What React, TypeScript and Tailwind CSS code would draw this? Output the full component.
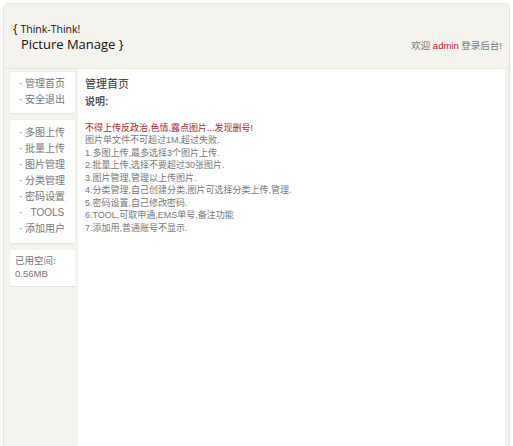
export default function App() {
  const menu1 = ['管理首页', '安全退出'];
  const menu2 = ['多图上传', '批量上传', '图片管理', '分类管理', '密码设置', 'TOOLS', '添加用户'];
  const lines = [
    '图片单文件不可超过1M,超过失败.',
    '1.多图上传,最多选择3个图片上传.',
    '2.批量上传,选择不要超过30张图片.',
    '3.图片管理,管理以上传图片.',
    '4.分类管理,自己创建分类,图片可选择分类上传,管理.',
    '5.密码设置,自己修改密码.',
    '6.TOOL,可取申通,EMS单号,备注功能',
    '7.添加用,普通账号不显示.',
  ];
  return (
    <div
      className="w-[513px] h-[446px] bg-white pt-[3px] px-[3px] overflow-hidden"
      style={{ fontFamily: '"Liberation Sans", "Noto Sans CJK SC", sans-serif' }}
    >
      <div className="h-[443px] flex flex-col rounded-t-[6px] border border-b-0 border-[#e4e3dc] bg-[#f4f3ee]">
        <header className="h-[65px] flex items-end justify-between pl-[9px] pr-[7px] pb-[14px] border-b border-[#e8e7e0]">
          <div className="text-[#111] mb-[2px]" style={{ fontFamily: '"Open Sans", sans-serif' }}>
            <div className="flex items-baseline gap-[3px] leading-[14px]">
              <span className="text-[12px]">{'{'}</span>
              <span className="text-[10.5px]">Think-Think!</span>
            </div>
            <div className="text-[13px] pl-[8px] leading-[16px]">Picture Manage {'}'}</div>
          </div>
          <div className="text-[9.5px] text-[#777] pb-[1px]">
            欢迎 <span className="text-[#c0203a]">admin</span> 登录后台!
          </div>
        </header>
        <div className="flex flex-1 pl-[6px] pr-[4px]">
          <aside className="w-[68px] flex flex-col gap-[6px] pt-[3px] pr-[3px] text-[10px] text-[#777]">
            <div className="bg-white border-b border-[#e6e5df] rounded-[2px] pt-[4px] pb-[5px] pl-[9px] flex flex-col leading-[16px] shadow-[0_0_2px_rgba(0,0,0,0.06)]">
              {menu1.map((m) => (
                <div key={m}>· {m}</div>
              ))}
            </div>
            <div className="bg-white border-b border-[#e6e5df] rounded-[2px] pt-[5px] pb-[6px] pl-[9px] flex flex-col leading-[16px] shadow-[0_0_2px_rgba(0,0,0,0.06)]">
              {menu2.map((m) => (
                <div key={m}>
                  {m === 'TOOLS' ? <span>·&nbsp;&nbsp; TOOLS</span> : `· ${m}`}
                </div>
              ))}
            </div>
            <div className="bg-white border-b border-dotted border-[#ccc] pt-[4px] pb-[6px] pl-[5px] leading-[13px] text-[9.5px]">
              <div>已用空间:</div>
              <div>0.56MB</div>
            </div>
          </aside>
          <main className="flex-1 bg-white pl-[7px] pt-[8px] text-[9px] text-[#777] leading-[12.5px]">
            <div className="text-[11px] text-[#333] leading-[14px]">管理首页</div>
            <div className="text-[10px] font-bold text-[#555] mt-[5px]">说明:</div>
            <div className="mt-[13px] text-[#b3252e]">不得上传反政治,色情,露点图片...发现删号!</div>
            {lines.map((l) => (
              <div key={l}>{l}</div>
            ))}
          </main>
        </div>
      </div>
    </div>
  );
}
